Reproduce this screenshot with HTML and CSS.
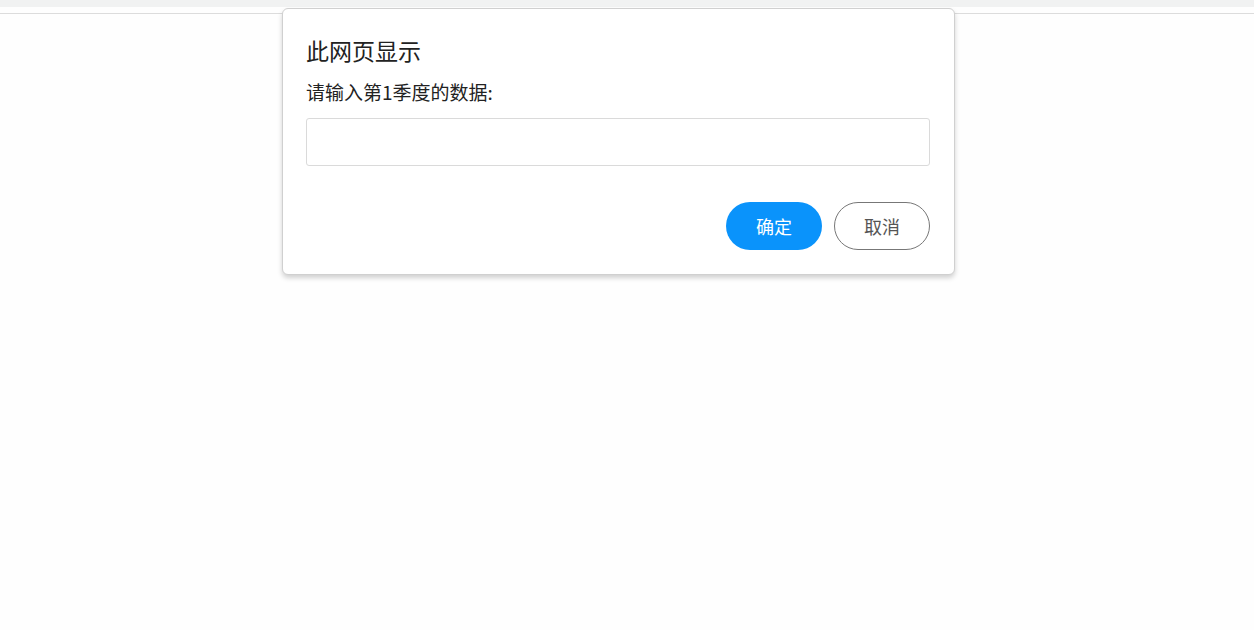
FILE: index.html
```html
<!DOCTYPE html>
<html lang="zh-CN">
<head>
<meta charset="utf-8">
<title>此网页显示</title>
<link rel="stylesheet" href="styles.css">
</head>
<body>
<div class="topbar"></div>
<div class="page"></div>
<div class="dialog">
  <div class="title">此网页显示</div>
  <div class="message">请输入第1季度的数据:</div>
  <input class="field" type="text">
  <div class="actions">
    <button class="btn primary">确定</button>
    <button class="btn secondary">取消</button>
  </div>
</div>
</body>
</html>
```
FILE: styles.css
```css
html, body {
  margin: 0;
  padding: 0;
  height: 100%;
  background: #fefefe;
  font-family: "Noto Sans CJK SC", "Noto Sans", sans-serif;
  overflow: hidden;
}
.topbar {
  height: 7px;
  background: #f1f2f2;
}
.page {
  margin-top: 6px;
  border-top: 1px solid #dcdcdc;
  height: calc(100% - 14px);
  background: #fefefe;
}
.dialog {
  position: absolute;
  left: 282px;
  top: 8px;
  width: 624px;
  padding: 25px 24px 24px 23px;
  background: #fff;
  border: 1px solid #d0d0d0;
  border-radius: 6px;
  box-shadow: 0 3px 5px rgba(0, 0, 0, 0.18);
  display: flex;
  flex-direction: column;
  color: #222;
}
.title {
  font-size: 23px;
  line-height: 32px;
}
.message {
  font-size: 19px;
  line-height: 26px;
  margin-top: 13px;
}
.field {
  margin-top: 13px;
  height: 48px;
  box-sizing: border-box;
  border: 1px solid #dadada;
  border-radius: 3px;
  outline: none;
  background: #fff;
  width: 100%;
}
.actions {
  display: flex;
  justify-content: flex-end;
  gap: 12px;
  margin-top: 36px;
}
.btn {
  width: 96px;
  height: 48px;
  border-radius: 24px;
  font-family: "Noto Sans CJK SC", sans-serif;
  font-size: 18px;
  cursor: pointer;
}
.primary {
  background: #0a93fb;
  color: #fff;
  border: none;
}
.secondary {
  background: #fff;
  color: #555;
  border: 1px solid #777;
}
```
